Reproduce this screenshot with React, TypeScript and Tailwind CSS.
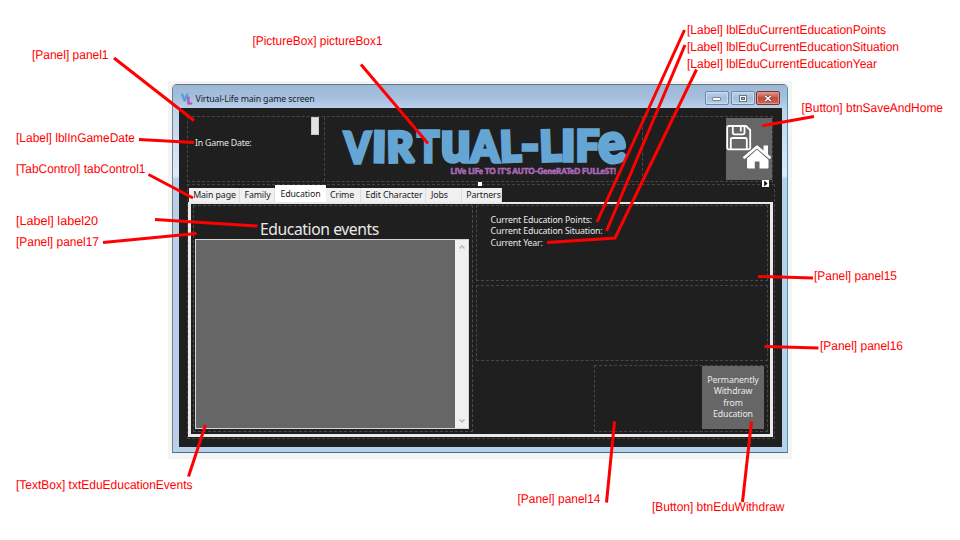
import React from "react";

const notes = [
  { t: "[Panel] panel1", x: 32, y: 59, w: 76.5 },
  { t: "[Label] lblInGameDate", x: 16, y: 142, w: 119 },
  { t: "[TabControl] tabControl1", x: 16, y: 172.5, w: 129.5 },
  { t: "[Label] label20", x: 16, y: 224.5, w: 82 },
  { t: "[Panel] panel17", x: 16, y: 246, w: 83 },
  { t: "[TextBox] txtEduEducationEvents", x: 16, y: 488.5, w: 176.5 },
  { t: "[PictureBox] pictureBox1", x: 252.5, y: 44.5, w: 130 },
  { t: "[Label] lblEduCurrentEducationPoints", x: 687, y: 34, w: 199 },
  { t: "[Label] lblEduCurrentEducationSituation", x: 687, y: 51, w: 212 },
  { t: "[Label] lblEduCurrentEducationYear", x: 687, y: 67.5, w: 190 },
  { t: "[Button] btnSaveAndHome", x: 801.5, y: 112, w: 141.5 },
  { t: "[Panel] panel15", x: 814, y: 280, w: 83 },
  { t: "[Panel] panel16", x: 820, y: 350, w: 83 },
  { t: "[Panel] panel14", x: 517.5, y: 503, w: 83 },
  { t: "[Button] btnEduWithdraw", x: 652, y: 510.5, w: 132.5 },
];

const leaders = [
  "114,58 194,120.5",
  "139,139.5 194,142.5",
  "148.5,174.5 193,198",
  "155,219.5 257.5,226",
  "103,242.5 196.5,233.5",
  "188.5,476.5 205.5,425",
  "361,64.5 428,143.5",
  "684.5,30 597,222",
  "685,45 606.5,231",
  "696.5,69.5 615,238 547,242.5",
  "814,116.5 762.3,125.7",
  "758,276.5 813,278",
  "764.5,346.5 818.5,348",
  "614.5,421.5 606.5,502.5",
  "751.5,421.5 742.5,502",
];

const logoLetters = [
  { c: "V", x: 343.5, w: 26, y: 163, h: 42, r: 0 },
  { c: "I", x: 371.5, w: 14, y: 162, h: 42, r: 1 },
  { c: "R", x: 386, w: 27, y: 162, h: 42, r: -1 },
  { c: "T", x: 416.5, w: 22, y: 162, h: 42, r: 0 },
  { c: "u", x: 440, w: 30, y: 162.5, h: 57, r: 0 },
  { c: "A", x: 470.5, w: 28, y: 162, h: 42, r: 0 },
  { c: "L", x: 499.5, w: 21, y: 161.5, h: 42, r: -2 },
  { c: "-", x: 520.5, w: 18, y: 161, h: 44, r: 0 },
  { c: "L", x: 539.5, w: 21.5, y: 161, h: 42, r: -2 },
  { c: "I", x: 561, w: 14, y: 161, h: 42, r: 0 },
  { c: "F", x: 575.5, w: 23.5, y: 161.5, h: 42, r: 0 },
  { c: "e", x: 598, w: 28, y: 162.5, h: 56, r: -6 },
];

function Logo() {
  return (
    <svg viewBox="324 117 318 63" className="block h-[63px] w-[317px] overflow-visible">
      <g fill="#64a5d4" stroke="#64a5d4" strokeWidth="3.6" strokeLinejoin="miter" strokeMiterlimit="2" fontFamily="Lato, sans-serif" fontWeight="900">
        {logoLetters.map((l, i) => (
          <text key={i} x={l.x} y={l.y} fontSize={l.h} textLength={l.w} lengthAdjust="spacingAndGlyphs" transform={`rotate(${l.r} ${l.x + l.w / 2} 148)`}>
            {l.c}
          </text>
        ))}
      </g>
      <text x="450" y="173.6" fontSize="8.4" textLength="166" lengthAdjust="spacingAndGlyphs" fill="#a868b6" stroke="#a868b6" strokeWidth="0.6" fontFamily="Lato, sans-serif" fontWeight="900" textRendering="geometricPrecision">
        LIVe LIFe TO IT'S AUTO-GeneRATeD FULLeST!
      </text>
    </svg>
  );
}

function SaveHome() {
  return (
    <svg viewBox="0 0 46 62" className="block h-[62px] w-[46px]">
      <g fill="none" stroke="#fff" strokeWidth="1.8" strokeLinejoin="round">
        <path d="M3 8H20L24.2 12V29.5Q24.2 31.3 22.4 31.3H3Q1.2 31.3 1.2 29.5V9.8Q1.2 8 3 8Z" />
        <path d="M6.8 8V14.5Q6.8 16.3 8.6 16.3H16.7Q18.5 16.3 18.5 14.5V8M14.8 8.5V13.5" />
        <path d="M4.8 31V21.5Q4.8 20 6.3 20H19.3Q20.8 20 20.8 21.5V31" />
      </g>
      <path d="M31 31L21 40V49.5Q21 50.5 22 50.5H28.8V43.5H33.5V50.5H41.5Q42.5 50.5 42.5 49.5V40Z" fill="#fff" />
      <path d="M17.5 40.5L31 28.5L44.5 40.5" fill="none" stroke="#666" strokeWidth="4.4" />
      <path d="M17.5 40.3L31 28.7L44.5 40.3" fill="none" stroke="#fff" strokeWidth="2.7" strokeLinejoin="round" />
      <path d="M37.5 27.5H42V37L37.5 33Z" fill="#fff" />
    </svg>
  );
}

function TitleBar() {
  return (
    <div className="flex h-[23px] items-start bg-linear-to-b from-[#9db8d6] via-[#a4bedd] to-[#b9cfea] pl-[8px] pr-[7px]">
      <svg viewBox="0 0 12 12" className="mt-[8px] h-[12px] w-[12px] shrink-0">
        <text x="0.3" y="8.3" fontSize="9.5" fontWeight="900" fontFamily="Lato, sans-serif" fill="#4fa0d8" stroke="#4fa0d8" strokeWidth=".8" textLength="6.5" lengthAdjust="spacingAndGlyphs">V</text>
        <text x="6" y="10.8" fontSize="9.5" fontWeight="900" fontFamily="Lato, sans-serif" fill="#b456bd" stroke="#b456bd" strokeWidth=".8">L</text>
      </svg>
      <span className="ml-[2.5px] mt-[8px] whitespace-nowrap text-[8.8px] leading-[12px] tracking-[-0.14px] text-[#17202c]">Virtual-Life main game screen</span>
      <div className="ml-auto mt-[6px] flex gap-[1.5px]">
        <div className="flex h-[14px] w-[24.5px] items-center justify-center rounded-[2px] border border-[#6f87a6] bg-linear-to-b from-[#bfd3ea] via-[#a3bddb] to-[#b9d0ea] shadow-[inset_0_0_0_1px_#c9dcf0]">
          <div className="mt-[2px] h-[4px] w-[9px] rounded-[1px] border border-[#7c8794] bg-white" />
        </div>
        <div className="flex h-[14px] w-[24px] items-center justify-center rounded-[2px] border border-[#6f87a6] bg-linear-to-b from-[#bfd3ea] via-[#a3bddb] to-[#b9d0ea] shadow-[inset_0_0_0_1px_#c9dcf0]">
          <div className="flex h-[7px] w-[8px] items-center justify-center border border-[#6a7583] bg-white">
            <div className="h-[3px] w-[4px] border border-[#5a6573] bg-[#a9bfda]" />
          </div>
        </div>
        <div className="flex h-[14px] w-[24px] items-center justify-center rounded-[2px] border border-[#7a3330] bg-linear-to-b from-[#dc9b8e] via-[#c24b38] to-[#cd6854] shadow-[inset_0_0_0_1px_#dd9585]">
          <svg viewBox="0 0 8 7" className="h-[7px] w-[8px]">
            <path d="M1.2 1L6.8 6M6.8 1L1.2 6" stroke="#59414a" strokeWidth="2.8" />
            <path d="M1.2 1L6.8 6M6.8 1L1.2 6" stroke="#fff" strokeWidth="1.6" />
          </svg>
        </div>
      </div>
    </div>
  );
}

function Header() {
  return (
    <div className="ml-[8px] mt-[8px] flex h-[66px] w-[586px] border border-dashed border-[#474747]">
      <div className="flex w-[137px] shrink-0 justify-between border-r border-dashed border-[#474747] pl-[7px] pr-[5px]">
        <span className="mt-[20px] whitespace-nowrap text-[8.8px] leading-[12px] tracking-[-0.22px] text-[#e6e6e6]">In Game Date:</span>
        <div className="h-[18px] w-[8px] border border-[#c8c8c8] bg-[#e3e3e3]" />
      </div>
      <div className="w-[318px] shrink-0 border-r border-dashed border-[#474747]">
        <Logo />
      </div>
      <div className="ml-auto mt-[1px] h-[62px] w-[46px] bg-[#666]">
        <SaveHome />
      </div>
    </div>
  );
}

function Tabs() {
  const tab = "h-[14px] shrink-0 whitespace-nowrap border-r border-[#dcdcdc] bg-[#f0f0f0] text-center text-[8.8px] leading-[15px] tracking-[-0.1px] text-[#202020]";
  return (
    <div className="ml-[1px] flex h-[17px] items-end">
      <div className={`${tab} w-[51px] pl-px`}>Main page</div>
      <div className={`${tab} w-[35px] pl-px`}>Family</div>
      <div className="h-[17px] w-[51px] shrink-0 whitespace-nowrap bg-white text-center text-[8.8px] leading-[18px] tracking-[-0.1px] text-[#202020]">Education</div>
      <div className={`${tab} w-[35px] pr-[2px]`}>Crime</div>
      <div className={`${tab} w-[65px] pl-[2px]`}>Edit Character</div>
      <div className={`${tab} w-[36px] pr-[8px]`}>Jobs</div>
      <div className={`${tab} w-[40px] pl-[4px]`}>Partners</div>
    </div>
  );
}

function EventsPanel() {
  return (
    <div className="flex h-[227px] w-[280px] shrink-0 flex-col border border-dashed border-[#4b4b4b] pl-[1px]">
      <h1 className="ml-[65px] mt-[13px] h-[20px] whitespace-nowrap text-[15.7px] leading-[20px] tracking-[-0.42px] text-[#e9e9e9]">Education events</h1>
      <div className="flex h-[190px] w-[274px] justify-end border border-[#d5d5d5] bg-[#666]">
        <div className="flex w-[13px] flex-col items-center justify-between bg-[#f0f0f0] py-[4px]">
          <svg viewBox="0 0 8 6" className="h-[6px] w-[8px]"><path d="M1.5 4.5L4 2L6.5 4.5" fill="none" stroke="#b5b5b5" strokeWidth="1.4" /></svg>
          <svg viewBox="0 0 8 6" className="h-[6px] w-[8px]"><path d="M1.5 1.5L4 4L6.5 1.5" fill="none" stroke="#b5b5b5" strokeWidth="1.4" /></svg>
        </div>
      </div>
    </div>
  );
}

function RightColumn() {
  return (
    <div className="flex w-[292px] flex-col">
      <div className="h-[76px] border border-dashed border-[#474747] pl-[13.5px] pt-[9px] text-[8.8px] leading-[11.4px] tracking-[-0.16px] text-[#e9e9e9]">
        <div>Current Education Points:</div>
        <div>Current Education Situation:</div>
        <div>Current Year:</div>
      </div>
      <div className="mt-[4px] h-[76px] border border-dashed border-[#474747]" />
      <div className="ml-auto mt-[4px] flex h-[67px] w-[174px] justify-end border border-dashed border-[#474747] pr-[3px]">
        <button className="h-[63px] w-[62px] bg-[#666] text-center text-[8.8px] leading-[11.3px] tracking-[-0.14px] text-[#e9e9e9]">
          Permanently<br />Withdraw<br />from<br />Education
        </button>
      </div>
    </div>
  );
}

export default function App() {
  return (
    <div className="relative h-[540px] w-[960px] overflow-hidden bg-white pl-[168px] pt-[81px] font-['Noto_Sans',sans-serif]">
      <div className="h-[378px] w-[624px] bg-[#f4f4f4] pl-[4px] pt-[3px]">
        <div className="h-[369px] w-[616px] overflow-hidden rounded-t-[5px] border border-b-[#3d7587] border-l-[#777f85] border-r-[#3f9cb0] border-t-[#66717c] bg-[#b8d0ea]">
          <TitleBar />
          <div className="flex">
            <div className="h-[339px] w-[6px] shrink-0 bg-linear-to-b from-[#bdd2eb] from-0% via-[#e0eafa] via-20% to-[#b8d0ea] to-21%" />
            <div className="h-[339px] w-[603px] shrink-0 overflow-hidden bg-[#1f1f1f]">
              <Header />
              <div className="ml-[8px] mt-[2px] h-[255px] w-[588px] border border-dashed border-[#444]">
                <Tabs />
                <div className="flex h-[235px] w-[585px] gap-[3px] border-x-[3px] border-b-[3px] border-t-2 border-[#e9e9e9] pl-[2px] pt-[1px]">
                  <EventsPanel />
                  <RightColumn />
                </div>
              </div>
            </div>
            <div className="h-[339px] grow bg-linear-to-b from-[#bdd2eb] from-0% via-[#e0eafa] via-20% to-[#b8d0ea] to-21%" />
          </div>
        </div>
      </div>

      {/* Designer handles on the tab control */}
      <div className="absolute left-[478px] top-[182px] h-[4px] w-[4px] bg-white" />
      <svg viewBox="0 0 7 7" className="absolute left-[762px] top-[180px] h-[7px] w-[7px]">
        <rect width="7" height="7" fill="#fff" />
        <path d="M2.5 1.2L5.2 3.5L2.5 5.8Z" fill="#000" stroke="#000" strokeWidth=".6" />
      </svg>

      {/* Callouts */}
      <svg viewBox="0 0 960 540" className="absolute left-0 top-0 h-[540px] w-[960px]">
        {leaders.map((p) => (
          <polyline key={p} points={p} fill="none" stroke="#ff0000" strokeWidth="3" />
        ))}
        <g fill="#ff0000" fontFamily="'Liberation Sans', Arial, sans-serif" fontSize="12.6" textRendering="geometricPrecision">
          {notes.map((n) => (
            <text key={n.t} x={n.x} y={n.y} textLength={n.w} lengthAdjust="spacingAndGlyphs">{n.t}</text>
          ))}
        </g>
      </svg>
    </div>
  );
}
